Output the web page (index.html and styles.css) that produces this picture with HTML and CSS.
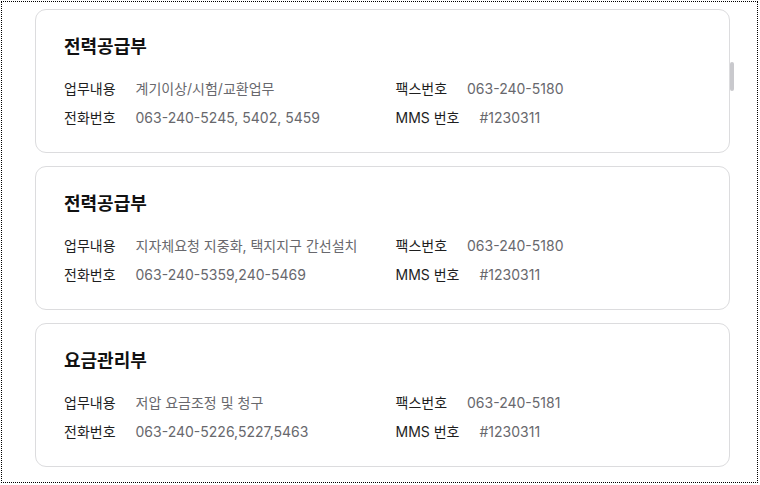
FILE: index.html
```html
<!DOCTYPE html>
<html lang="ko">
<head>
<meta charset="utf-8">
<link rel="stylesheet" href="styles.css">
</head>
<body>
<div class="frame">
  <div class="list">
    <section class="card">
      <h2 class="title">전력공급부</h2>
      <div class="grid">
        <div class="row"><span class="label">업무내용</span><span class="value">계기이상/시험/교환업무</span></div>
        <div class="row"><span class="label">팩스번호</span><span class="value">063-240-5180</span></div>
        <div class="row"><span class="label">전화번호</span><span class="value">063-240-5245, 5402, 5459</span></div>
        <div class="row"><span class="label">MMS 번호</span><span class="value">#1230311</span></div>
      </div>
    </section>
    <section class="card">
      <h2 class="title">전력공급부</h2>
      <div class="grid">
        <div class="row"><span class="label">업무내용</span><span class="value">지자체요청 지중화, 택지지구 간선설치</span></div>
        <div class="row"><span class="label">팩스번호</span><span class="value">063-240-5180</span></div>
        <div class="row"><span class="label">전화번호</span><span class="value">063-240-5359,240-5469</span></div>
        <div class="row"><span class="label">MMS 번호</span><span class="value">#1230311</span></div>
      </div>
    </section>
    <section class="card">
      <h2 class="title">요금관리부</h2>
      <div class="grid">
        <div class="row"><span class="label">업무내용</span><span class="value">저압 요금조정 및 청구</span></div>
        <div class="row"><span class="label">팩스번호</span><span class="value">063-240-5181</span></div>
        <div class="row"><span class="label">전화번호</span><span class="value">063-240-5226,5227,5463</span></div>
        <div class="row"><span class="label">MMS 번호</span><span class="value">#1230311</span></div>
      </div>
    </section>
  </div>
  <div class="scroll-thumb"></div>
</div>
</body>
</html>
```

FILE: styles.css
```css
* { box-sizing: border-box; }
html, body { margin: 0; padding: 0; background: #fff; }
body {
  font-family: Inter, "Noto Sans CJK KR", sans-serif;
  color: #222;
}
.frame {
  position: relative;
  margin: 1px 0 0 1px;
  width: 757px;
  height: 482px;
  border: 1px dotted #000;
  padding: 7px 27px 0 33px;
  overflow: hidden;
}
.list {
  display: flex;
  flex-direction: column;
  gap: 13px;
}
.card {
  height: 144px;
  border: 1px solid #dcdcde;
  border-radius: 11px;
  padding: 24px 28px 0 28px;
  background: #fff;
}
.title {
  margin: 0;
  font-size: 18px;
  line-height: 26px;
  font-weight: 700;
  color: #111;
}
.grid {
  margin-top: 14px;
  display: grid;
  grid-template-columns: 1fr 1fr;
  column-gap: 26px;
}
.row {
  display: flex;
  gap: 20px;
  font-size: 14px;
  line-height: 29px;
  white-space: nowrap;
}
.label { color: #1e1e1e; }
.value { color: #68686d; }
.scroll-thumb {
  position: absolute;
  left: 728px;
  top: 60px;
  width: 4px;
  height: 29px;
  border-radius: 2px;
  background: #c9c9cd;
}
```
